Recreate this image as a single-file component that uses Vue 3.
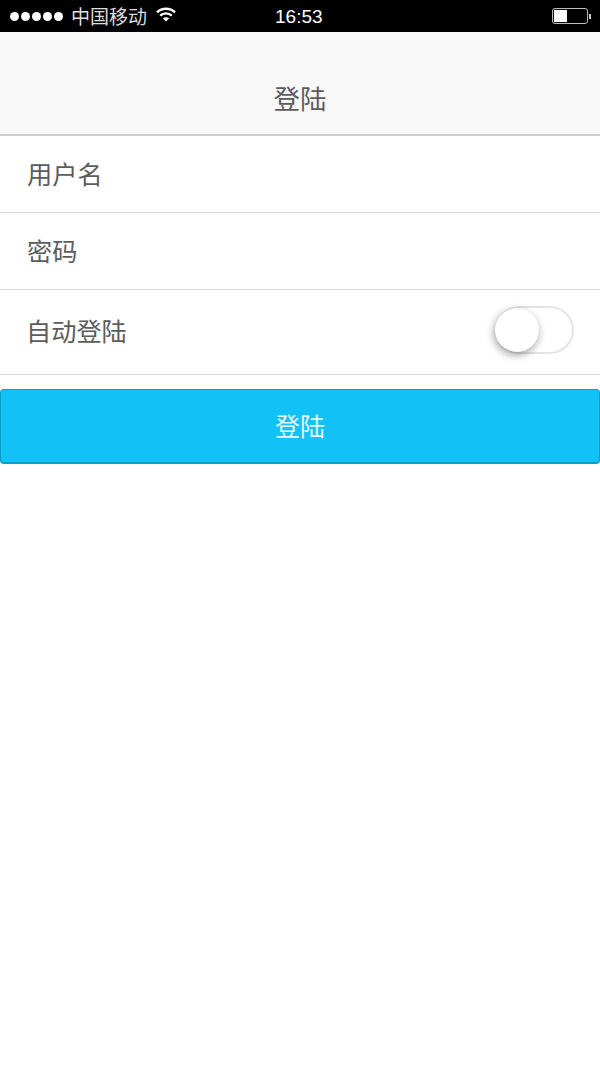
<script setup>
const rows = ['用户名', '密码']
</script>

<template>
  <div class="page">
    <div class="status">
      <div class="signal"><i v-for="n in 5" :key="n"></i></div>
      <span class="carrier">中国移动</span>
      <svg class="wifi" width="20" height="15" viewBox="0 0 20 15">
        <path d="M1 5.4C6 .6 14 .6 19 5.4" fill="none" stroke="#fff" stroke-width="2.4"/>
        <path d="M4.2 8.6C7.4 5.6 12.6 5.6 15.8 8.6" fill="none" stroke="#fff" stroke-width="2.4"/>
        <path d="M6.8 11.2C8.8 9.8 11.2 9.8 13.2 11.2L10 14.5Z" fill="#fff"/>
      </svg>
      <span class="time">16:53</span>
      <div class="battery"><div class="level"></div></div>
      <div class="nub"></div>
    </div>
    <header class="nav">登陆</header>
    <div class="row" v-for="r in rows" :key="r">{{ r }}</div>
    <div class="row auto">
      <span>自动登陆</span>
      <div class="toggle"><div class="knob"></div></div>
    </div>
    <button class="login">登陆</button>
  </div>
</template>

<style scoped>
.page {
  width: 600px;
  height: 1067px;
  background: #fff;
  overflow: hidden;
  font-family: "Noto Sans CJK SC", "Liberation Sans", sans-serif;
  color: #5c5c5c;
}
.status {
  height: 32px;
  background: #000;
  color: #ddd;
  display: flex;
  align-items: center;
  padding-left: 10px;
  box-sizing: border-box;
  position: relative;
}
.signal { display: flex; gap: 2px; }
.signal i { width: 9px; height: 9px; border-radius: 50%; background: #fff; display: block; }
.carrier { font-size: 19px; margin-left: 8px; line-height: 30px; margin-top: -1px; }
.wifi { margin-left: 9px; margin-top: -3px; }
.time {
  position: absolute;
  left: 275px;
  top: 0;
  line-height: 33px;
  font-size: 19px;
  font-family: "Liberation Sans", sans-serif;
  color: #fff;
}
.battery {
  position: absolute;
  left: 552px;
  top: 8px;
  width: 36px;
  height: 16px;
  box-sizing: border-box;
  border: 1px solid #bbb;
  border-radius: 3px;
  padding: 1px;
}
.level { width: 13px; height: 100%; background: #fff; }
.nub { position: absolute; left: 589px; top: 14px; width: 2px; height: 5px; background: #ccc; }
.nav {
  height: 104px;
  box-sizing: border-box;
  background: #f8f8f8;
  border-bottom: 2px solid #d0d0d0;
  text-align: center;
  font-size: 26.5px;
  line-height: 132px;
}
.row {
  height: 77px;
  box-sizing: border-box;
  border-bottom: 1px solid #d9d9d9;
  padding-left: 27px;
  font-size: 25.2px;
  line-height: 75px;
}
.auto {
  height: 85px;
  line-height: 84px;
  padding-right: 26px;
  padding-left: 26px;
  padding-bottom: 5px;
  display: flex;
  justify-content: space-between;
  align-items: center;
}
.toggle {
  position: relative;
  width: 79px;
  height: 48px;
  box-sizing: border-box;
  border: 2px solid #e4e4e4;
  border-radius: 24px;
  background: #fff;
}
.knob {
  position: absolute;
  left: -2px;
  top: 0;
  width: 44px;
  height: 44px;
  border-radius: 50%;
  background: #fff;
  box-shadow: -1px 3px 8px rgba(0, 0, 0, 0.38);
}
.login {
  display: block;
  width: 100%;
  height: 75px;
  margin-top: 14px;
  padding: 0 0 3px;
  background: #12c1f5;
  border: 1px solid #0f9cc6;
  border-bottom-width: 2px;
  border-radius: 4px;
  color: #e6f8fe;
  font-family: inherit;
  font-size: 25px;
}
</style>
